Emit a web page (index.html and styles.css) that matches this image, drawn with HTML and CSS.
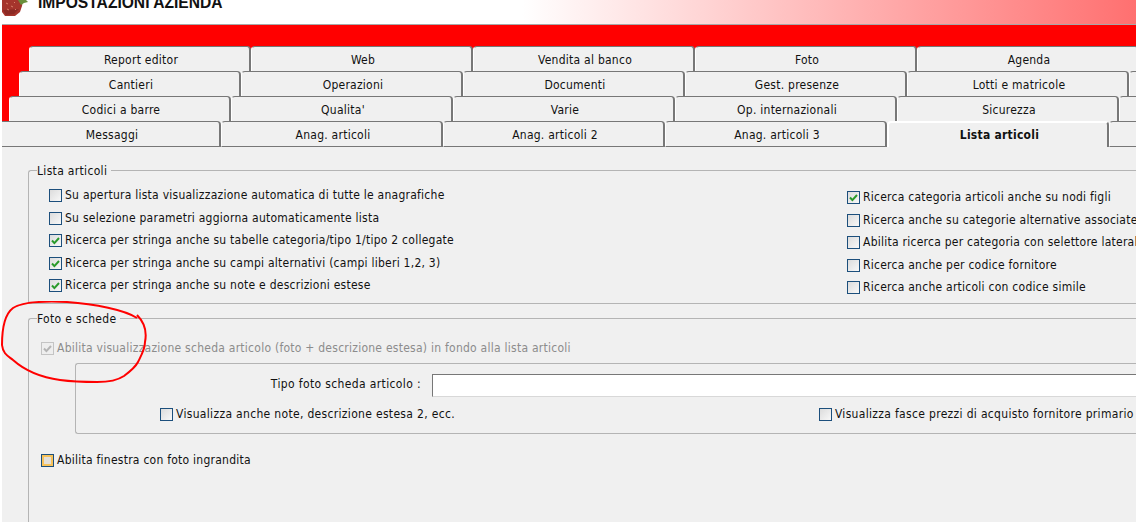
FILE: index.html
```html
<!DOCTYPE html>
<html lang="it">
<head>
<meta charset="utf-8">
<title>Impostazioni azienda</title>
<link rel="stylesheet" href="styles.css">
</head>
<body>
<header class="titlebar">
  <svg class="logo" width="26" height="17" viewBox="0 0 26 17"><path d="M0 0h21l-1 6-2 6-5 4H3L0 12z" fill="#a5352c"/><path d="M1 10l3 5 8-1 5-5z" fill="#8c2a24"/><path d="M16 0l3 5 3-2 4-1-2-2z" fill="#6a8f3c"/><path d="M4 3l2 1M9 6l2 1M5 9l2 1M12 2l1 1M13 9l1 1" stroke="#d9806a"/></svg>
  <h1 class="title">IMPOSTAZIONI AZIENDA</h1>
</header>
<div class="redband"></div>
<div class="tabrow r1"><div class="tabs">
  <div class="tab">Report editor</div><div class="tab">Web</div><div class="tab">Vendita al banco</div><div class="tab">Foto</div><div class="tab">Agenda</div>
</div></div>
<div class="tabrow r2"><div class="tabs">
  <div class="tab">Cantieri</div><div class="tab">Operazioni</div><div class="tab">Documenti</div><div class="tab">Gest. presenze</div><div class="tab">Lotti e matricole</div><div class="tab"></div>
</div></div>
<div class="tabrow r3"><div class="tabs">
  <div class="tab">Codici a barre</div><div class="tab">Qualita'</div><div class="tab">Varie</div><div class="tab">Op. internazionali</div><div class="tab">Sicurezza</div><div class="tab"></div>
</div></div>
<div class="tabrow r4"><div class="tabs">
  <div class="tab first">Messaggi</div><div class="tab">Anag. articoli</div><div class="tab">Anag. articoli 2</div><div class="tab">Anag. articoli 3</div><div class="tab active">Lista articoli</div><div class="tab"></div>
</div></div>
<main class="panel">
  <section class="group g1">
    <span class="legend">Lista articoli</span>
    <div class="cols">
      <div class="col left">
        <label class="chk"><i class="box"></i>Su apertura lista visualizzazione automatica di tutte le anagrafiche</label>
        <label class="chk"><i class="box"></i>Su selezione parametri aggiorna automaticamente lista</label>
        <label class="chk"><i class="box on"><svg viewBox="0 0 11 11"><path d="M2 5.5l2.4 2.6L9 3" /></svg></i>Ricerca per stringa anche su tabelle categoria/tipo 1/tipo 2 collegate</label>
        <label class="chk"><i class="box on"><svg viewBox="0 0 11 11"><path d="M2 5.5l2.4 2.6L9 3" /></svg></i>Ricerca per stringa anche su campi alternativi (campi liberi 1,2, 3)</label>
        <label class="chk"><i class="box on"><svg viewBox="0 0 11 11"><path d="M2 5.5l2.4 2.6L9 3" /></svg></i>Ricerca per stringa anche su note e descrizioni estese</label>
      </div>
      <div class="col right">
        <label class="chk"><i class="box on"><svg viewBox="0 0 11 11"><path d="M2 5.5l2.4 2.6L9 3" /></svg></i>Ricerca categoria articoli anche su nodi figli</label>
        <label class="chk"><i class="box"></i>Ricerca anche su categorie alternative associate</label>
        <label class="chk"><i class="box"></i>Abilita ricerca per categoria con selettore laterale</label>
        <label class="chk"><i class="box"></i>Ricerca anche per codice fornitore</label>
        <label class="chk"><i class="box"></i>Ricerca anche articoli con codice simile</label>
      </div>
    </div>
  </section>
  <section class="group g2">
    <span class="legend">Foto e schede</span>
    <label class="chk disabled"><i class="box off"><svg viewBox="0 0 11 11"><path d="M2 5.5l2.4 2.6L9 3" /></svg></i>Abilita visualizzazione scheda articolo (foto + descrizione estesa) in fondo alla lista articoli</label>
    <div class="inner">
      <div class="field"><span class="field-label">Tipo foto scheda articolo :</span><span class="input"></span></div>
      <div class="opts">
        <label class="chk"><i class="box"></i>Visualizza anche note, descrizione estesa 2, ecc.</label>
        <label class="chk opt2"><i class="box"></i>Visualizza fasce prezzi di acquisto fornitore primario</label>
      </div>
    </div>
    <label class="chk focus"><i class="box hot"></i>Abilita finestra con foto ingrandita</label>
  </section>
</main>
<svg class="scribble" width="150" height="90" viewBox="0 0 150 90"><path d="M137 17C125 9 95 3 67 1C45 0 22 1 13 7C5 13 2 26 2 44C3 53 8 55 13 59C22 67 38 76 60 79C75 81 88 81 97 81C108 81 118 79 124 75C132 69 136 65 138 61C142 53 145 48 145 41C147 31 145 22 137 14" /></svg>
</body>
</html>
```

FILE: styles.css
```css
* { box-sizing: border-box; }
html, body { margin: 0; height: 100%; }
body {
  width: 1136px;
  height: 522px;
  overflow: hidden;
  position: relative;
  background: #fff;
  font: 12px/15px "DejaVu Sans Condensed", "DejaVu Sans", sans-serif;
  letter-spacing: 0.25px;
  color: #111;
}
.titlebar {
  height: 25px;
  border-bottom: 1px solid #a8a8a8;
  margin-left: 2px;
  display: flex;
  overflow: hidden;
  background: linear-gradient(to right, #fff 520px, #ff7070 1134px);
}
.logo { flex: none; }
.title {
  margin: -5px 0 0 10px;
  font: bold 15.6px/16px "Liberation Sans", Arial, sans-serif;
  color: #111;
  letter-spacing: 0;
}
.redband { height: 21px; margin-left: 2px; background: #f00; }
.tabrow {
  height: 25px;
  margin-left: 2px;
  display: flex;
  overflow: hidden;
  background: #f00;
}
.tabs {
  display: flex;
  flex: none;
  background: linear-gradient(to right, #f00 4px, #f0f0f0 4px);
}
.r1 { padding-left: 27px; }
.r1 .tabs { background: #f00; }
.r2 { padding-left: 17px; }
.r3 { padding-left: 7px; }
.r4 { padding-left: 0; background: #f0f0f0; height: 26px; }
.r4 .tabs { background: #f0f0f0; }
.tab {
  flex: none;
  width: 222px;
  height: 25px;
  padding: 6px 0 0 3px;
  text-align: center;
  background: #f0f0f0;
  border-top: 1px solid #777;
  border-right: 2px solid #777;
  border-left: 1px solid #fff;
  border-top-left-radius: 4px;
  border-top-right-radius: 4px;
  color: #111;
}
.r4 .tab { height: 26px; border-bottom: 1px solid #777; }
.r4 .tab.first { width: 219px; border-left: 0; border-top-left-radius: 0; }
.r4 .tab.active {
  font-weight: bold;
  border-top: 2px solid #fff;
  border-left: 2px solid #fff;
  border-bottom: 0;
  padding-top: 5px;
}
.panel {
  height: 375px;
  margin-left: 2px;
  background: #f0f0f0;
  padding: 23px 0 0 26px;
  width: 1134px;
  overflow: hidden;
}
.group {
  position: relative;
  border: 1px solid #b4b4b4;
  border-radius: 3px 0 0 3px;
  border-right: 0;
  width: 1140px;
}
.legend {
  position: absolute;
  top: -7px;
  left: 8px;
  padding: 0 4px 0 0;
  background: #f0f0f0;
  line-height: 15px;
  letter-spacing: 0.32px;
}
.g1 { height: 134px; }
.g2 { height: 260px; margin-top: 14px; border-bottom: 0; padding: 22px 0 0 12px; }
.cols { display: flex; }
.col { display: flex; flex-direction: column; }
.left { width: 818px; padding: 17px 0 0 20px; gap: 7.6px; }
.right { padding: 19px 0 0 0; gap: 7.6px; }
.chk {
  display: flex;
  align-items: center;
  white-space: nowrap;
  height: 15px;
}
.box {
  flex: none;
  width: 13px;
  height: 13px;
  margin-right: 3px;
  border: 1px solid #1c4f7c;
  background: linear-gradient(135deg, #dcdcdc, #f8f8f8);
}
.box svg { display: block; width: 11px; height: 11px; fill: none; stroke: #2a9a2a; stroke-width: 2; }
.box.off { border-color: #c4c4c4; background: #eee; }
.box.off svg { stroke: #b4b4b4; }
.box.hot { border-color: #1c4f7c; background: #e4e0d8; box-shadow: inset 0 0 0 2px #f7c25a; }
.disabled { color: #8c8c8c; }
.inner {
  margin: 7px 0 0 34px;
  height: 71px;
  border: 1px solid #b4b4b4;
  border-right: 0;
  border-radius: 3px 0 0 3px;
  padding-top: 10px;
}
.field { display: flex; align-items: center; height: 23px; }
.field-label { width: 345px; padding-bottom: 2px; text-align: right; margin-right: 11px; letter-spacing: 0.37px; }
.input {
  flex: 1;
  height: 23px;
  background: #fff;
  border-top: 1px solid #777;
  border-left: 1px solid #777;
  border-bottom: 1px solid #d8d8d8;
}
.opts { display: flex; margin: 10px 0 0 84px; letter-spacing: 0.32px; }
.opt2 { margin-left: 364px; }
.focus { margin-top: 19px; }
.scribble {
  position: absolute;
  left: 0;
  top: 301px;
  fill: none;
  stroke: #f00;
  stroke-width: 2;
}
```
